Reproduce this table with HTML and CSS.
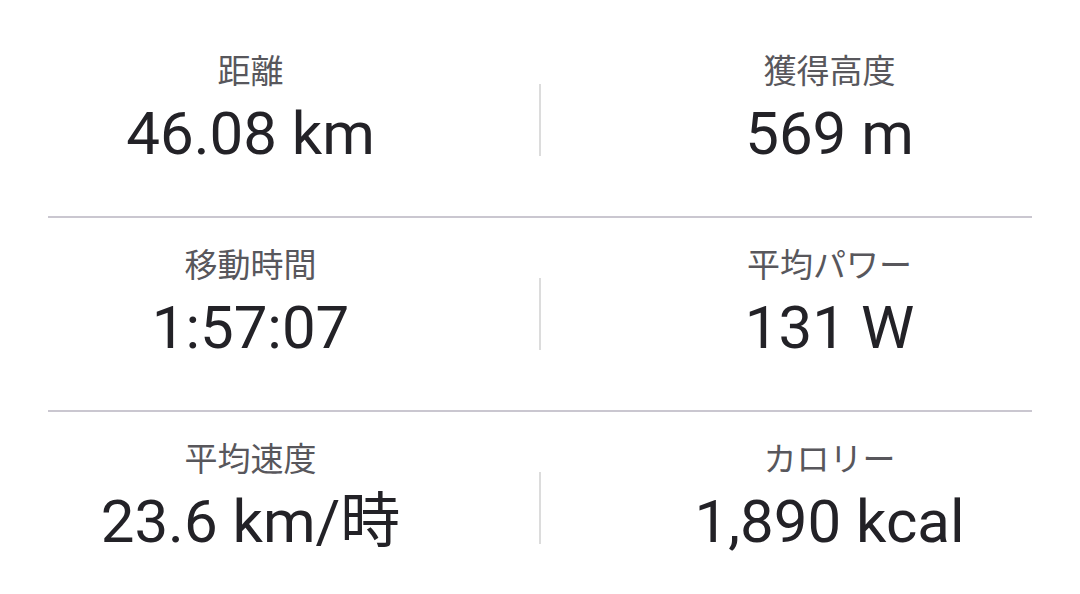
FILE: index.html
```html
<!DOCTYPE html>
<html lang="ja">
<head>
  <meta charset="UTF-8" />
  <title>アクティビティ統計</title>
  <meta name="viewport" content="width=device-width, initial-scale=1" />
  <link rel="stylesheet" href="styles.css">
</head>
<body>
  <div class="stats">
    <div class="row">
      <div class="cell">
        <div class="label">距離</div>
        <div class="value">46.08 km</div>
      </div>
      <div class="sep"></div>
      <div class="cell">
        <div class="label">獲得高度</div>
        <div class="value">569 m</div>
      </div>
    </div>
    <div class="row">
      <div class="cell">
        <div class="label">移動時間</div>
        <div class="value">1:57:07</div>
      </div>
      <div class="sep"></div>
      <div class="cell">
        <div class="label">平均パワー</div>
        <div class="value">131 W</div>
      </div>
    </div>
    <div class="row last">
      <div class="cell">
        <div class="label">平均速度</div>
        <div class="value">23.6 km/時</div>
      </div>
      <div class="sep"></div>
      <div class="cell">
        <div class="label">カロリー</div>
        <div class="value">1,890 kcal</div>
      </div>
    </div>
  </div>
</body>
</html>
```

FILE: styles.css
```css
body {
  margin: 0;
  background: #ffffff;
  font-family: Roboto, "Noto Sans CJK JP", sans-serif;
  overflow: hidden;
}

.stats {
  padding: 24px 48px 0;
}

.row {
  display: grid;
  grid-template-columns: 1fr 2px 1fr;
  column-gap: 86px;
  align-items: center;
  height: 192px;
  border-bottom: 2px solid #cac7d0;
}

.row.last {
  border-bottom: none;
}

.cell {
  text-align: center;
  align-self: start;
  padding-top: 28px;
}

.label {
  font-size: 33px;
  line-height: 40px;
  color: #58575c;
}

.value {
  margin-top: 7px;
  font-size: 60px;
  line-height: 70px;
  color: #232227;
}

.sep {
  width: 2px;
  height: 72px;
  background: #dcdcdc;
}
```
